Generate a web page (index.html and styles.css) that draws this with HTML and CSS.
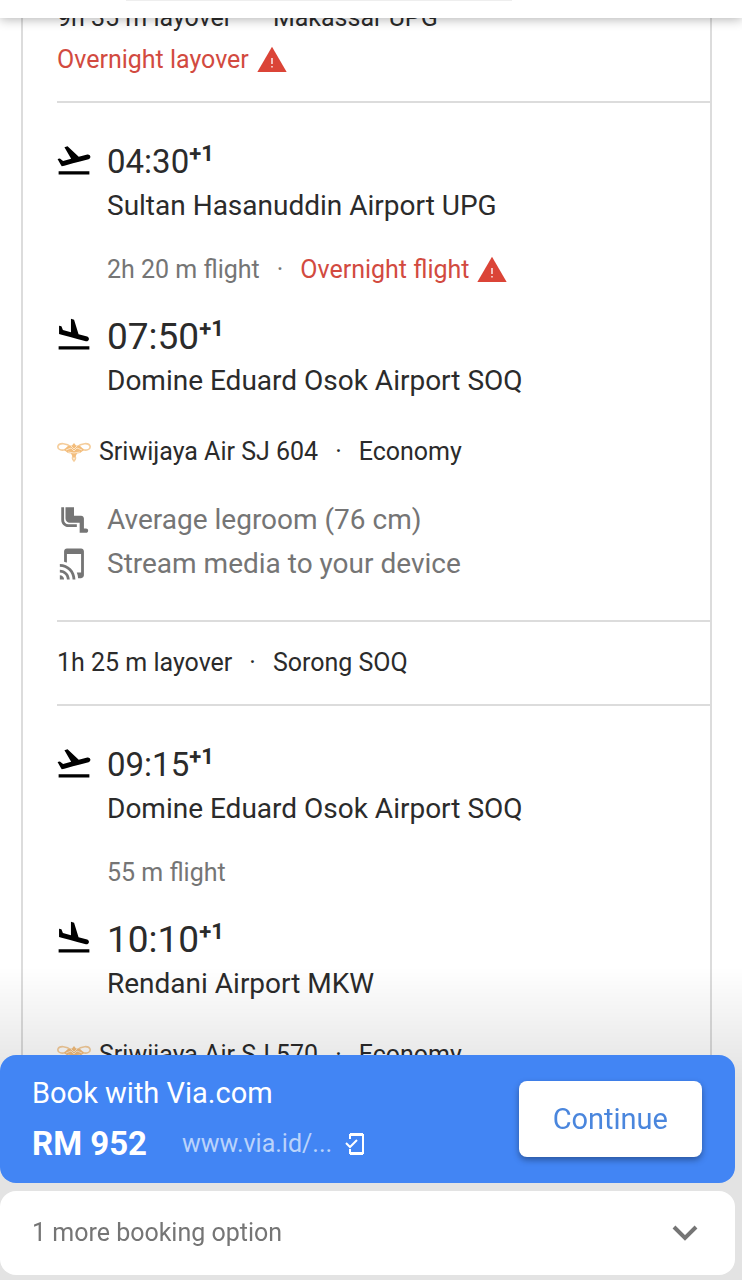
FILE: index.html
```html
<!DOCTYPE html>
<html lang="en">
<head>
<meta charset="utf-8">
<meta name="viewport" content="width=device-width, initial-scale=1">
<title>Flight details</title>
<link rel="stylesheet" href="styles.css">
</head>
<body>
<svg class="sprite" aria-hidden="true">
  <symbol id="takeoff" viewBox="1.5 1.5 21 21"><path d="M2.5 19h19v2h-19zm19.57-9.36c-.21-.8-1.04-1.28-1.84-1.06L14.92 10l-6.9-6.43-1.93.51 4.14 7.17-4.97 1.33-1.97-1.54-1.45.39 1.82 3.16.77 1.33 1.6-.43 5.31-1.42 4.35-1.16L21 11.49c.81-.23 1.28-1.05 1.07-1.85z"/></symbol>
  <symbol id="landing" viewBox="1.5 1.5 21 21"><path d="M2.5 19h19v2h-19zm7.18-5.73l4.35 1.16 5.31 1.42c.8.21 1.62-.26 1.84-1.06.21-.8-.26-1.62-1.06-1.84l-5.31-1.42-2.76-9.02L10.12 2v8.28L5.15 8.95l-.93-2.32-1.45-.39v5.17l1.6.43 5.31 1.43z"/></symbol>
  <symbol id="warning" viewBox="0 0 24 24"><path d="M1 21h22L12 2z"/><path fill="#fff" d="M11.5 10.5h1v4.5h-1zM11.5 16.5h1v1.2h-1z"/></symbol>
  <symbol id="legroom" viewBox="0 0 24 24"><path d="M5 12V3H3v9c0 2.76 2.24 5 5 5h6v-2H8c-1.66 0-3-1.34-3-3zm15.5 6H19v-7c0-1.1-.9-2-2-2h-5V3H6v8c0 1.65 1.35 3 3 3h7v7h4.5c.83 0 1.5-.67 1.5-1.5s-.67-1.5-1.5-1.5z"/></symbol>
  <symbol id="stream" viewBox="0 0 24 24"><path d="M2 16v2c2.76 0 5 2.24 5 5h2c0-3.87-3.13-7-7-7zm0 4v3h3c0-1.66-1.34-3-3-3zm0-8v2c4.97 0 9 4.03 9 9h2c0-6.08-4.92-11-11-11zM17 1.01L7 1c-1.1 0-2 .9-2 2v7.37c.69.16 1.36.37 2 .64V5h10v13h-3.03c.52 1.25.84 2.59.95 4H17c1.1 0 2-.9 2-2V3c0-1.1-.9-1.99-2-1.99z"/></symbol>
  <symbol id="sriwijaya" viewBox="0 0 34 22">
    <g fill="none" stroke="#f5cd9b" stroke-width="1.6">
      <path d="M14 6C10 2 2 1.500 1 5s4 5 7 3.500 3-4 6-2.500M20 6c4-4 12-4.500 13-1s-4 5-7 3.500-3-4-6-2.500"/>
      <path d="M17 14c-2 2-2 4 0 6 2-2 2-4 0-6"/>
    </g>
    <path fill="#f3bd7c" d="M17 2l2 2.500 4 .5 2 2 2 2-4 3-3 .5-1.500 3L17 17l-1.500-1.500-1.500-3-3-.5-4-3 2-2 2-2 4-.5z"/>
    <path d="M9 9l5-2 3 3 3-3 5 2M11 11l6 1 6-1M14 5l3 3 3-3" fill="none" stroke="#fdebd2" stroke-width=".9"/>
  </symbol>
</svg>

<header class="topbar"><div class="topbar-field"></div></header>

<main class="itinerary">
  <section class="layover">
    <p class="details"><span>9h 35 m layover</span><span>·</span><span>Makassar UPG</span></p>
    <p class="alert">Overnight layover <svg class="warning-icon"><use href="#warning"/></svg></p>
  </section>

  <section class="segment">
    <div class="stop">
      <svg class="stop-icon"><use href="#takeoff"/></svg>
      <div><p class="time departure">04:30<sup>+1</sup></p><p class="airport">Sultan Hasanuddin Airport UPG</p></div>
    </div>
    <p class="duration"><span>2h 20 m flight</span><span>·</span><span class="alert">Overnight flight <svg class="warning-icon"><use href="#warning"/></svg></span></p>
    <div class="stop">
      <svg class="stop-icon"><use href="#landing"/></svg>
      <div><p class="time arrival">07:50<sup>+1</sup></p><p class="airport">Domine Eduard Osok Airport SOQ</p></div>
    </div>
    <div class="airline"><svg class="airline-logo"><use href="#sriwijaya"/></svg><p class="airline-text"><span>Sriwijaya Air SJ 604</span><span>·</span><span>Economy</span></p></div>
    <ul class="amenities">
      <li><svg class="amenity-icon"><use href="#legroom"/></svg>Average legroom (76 cm)</li>
      <li><svg class="amenity-icon"><use href="#stream"/></svg>Stream media to your device</li>
    </ul>
  </section>

  <section class="layover">
    <p class="details"><span>1h 25 m layover</span><span>·</span><span>Sorong SOQ</span></p>
  </section>

  <section class="segment">
    <div class="stop">
      <svg class="stop-icon"><use href="#takeoff"/></svg>
      <div><p class="time departure">09:15<sup>+1</sup></p><p class="airport">Domine Eduard Osok Airport SOQ</p></div>
    </div>
    <p class="duration"><span>55 m flight</span></p>
    <div class="stop">
      <svg class="stop-icon"><use href="#landing"/></svg>
      <div><p class="time arrival">10:10<sup>+1</sup></p><p class="airport">Rendani Airport MKW</p></div>
    </div>
    <div class="airline"><svg class="airline-logo"><use href="#sriwijaya"/></svg><p class="airline-text"><span>Sriwijaya Air SJ 570</span><span>·</span><span>Economy</span></p></div>
  </section>
</main>

<footer class="booking">
  <div class="offer">
    <div class="offer-info">
      <p class="offer-title">Book with Via.com</p>
      <div class="offer-line">
        <strong class="price">RM 952</strong>
        <a class="site" href="#">www.via.id/...</a>
        <svg class="phone-icon" viewBox="0 0 20 24"><path d="M5 7V3h13v18H5v-4"/><path d="M5 2h13M5 22h13"/><path d="M1 11l4 4 7-7"/></svg>
      </div>
    </div>
    <button class="continue" type="button">Continue</button>
  </div>
  <button class="more" type="button">1 more booking option
    <svg class="chevron" viewBox="0 0 26 18"><path d="M2 3l11 11L24 3"/></svg>
  </button>
</footer>
</body>
</html>
```
FILE: styles.css
```css
* { box-sizing: border-box; }

body {
  margin: 0;
  height: 100vh;
  overflow: hidden;
  background: #fff;
  color: #2b2b2b;
  font-family: Roboto, "Liberation Sans", sans-serif;
  font-size: 25px;
}

p, ul { margin: 0; padding: 0; }
ul { list-style: none; }
svg { display: block; flex: none; fill: currentColor; }
.sprite { position: absolute; width: 0; height: 0; }

.topbar {
  position: fixed;
  top: 0;
  left: 0;
  right: 0;
  z-index: 1;
  height: 18px;
  padding: 0 31% 0 17%;
  background: #fff;
  box-shadow: 0 1px 12px rgba(0, 0, 0, .32);
}
.topbar-field {
  height: 1px;
  background: #eee;
}

/* Pulled up so the first layover sits partly scrolled under the top bar */
.itinerary {
  margin: -23px 30px 0 21px;
  padding-left: 34px;
  border: solid #dcdcdc;
  border-width: 0 2px;
}

.layover {
  padding: 20px 0;
  border-bottom: 2px solid #dcdcdc;
  line-height: 42px;
}
.details, .duration, .airline-text {
  display: flex;
  gap: 17px;
}
.alert {
  display: flex;
  align-items: center;
  gap: 7px;
  color: #d24a40;
}
.warning-icon { width: 32px; height: 32px; color: #db4437; }

.segment {
  padding: 37px 0 34px;
  border-bottom: 2px solid #dcdcdc;
}
.stop {
  display: grid;
  grid-template-columns: 50px 1fr;
  align-items: start;
}
.stop-icon {
  width: 34px;
  height: 34px;
  margin-top: 3px;
  color: #000;
}
.time { line-height: 44px; }
.departure { font-size: 33px; }
.arrival { font-size: 37px; }
.time sup {
  font-size: 22px;
  font-weight: 700;
  line-height: 0;
}
.airport { font-size: 28px; line-height: 44px; }
.duration {
  margin: 26px 0 29px 50px;
  color: #757575;
  line-height: 32px;
}
.airline {
  display: flex;
  align-items: center;
  gap: 8px;
  margin: 33px 0 30px;
  line-height: 32px;
}
.airline-logo { width: 34px; height: 22px; }

.amenities {
  color: #757575;
  font-size: 28px;
  line-height: 44px;
}
.amenities li {
  display: flex;
  align-items: center;
  gap: 16px;
}
.amenity-icon { width: 34px; height: 34px; }

.booking {
  position: fixed;
  left: 0;
  right: 0;
  bottom: 0;
  display: flex;
  flex-direction: column;
  gap: 8px;
  padding: 96px 7px 5px 0;
  background: linear-gradient(rgba(0, 0, 0, 0) 8px, rgba(0, 0, 0, .11) 120px);
}
.offer {
  display: flex;
  align-items: center;
  justify-content: space-between;
  padding: 13px 33px 13px 32px;
  border-radius: 16px;
  background: #4285f4;
  color: #fff;
}
.offer-title { font-size: 29px; line-height: 50px; }
.offer-line {
  display: flex;
  align-items: center;
  line-height: 52px;
}
.price { font-size: 33px; }
.site {
  margin: 0 13px 0 35px;
  color: #bad3fb;
  text-decoration: none;
}
.phone-icon {
  width: 20px;
  height: 24px;
  fill: none;
  stroke: #fff;
  stroke-width: 2;
}
.continue {
  padding: 16px 34px;
  border: 0;
  border-radius: 8px;
  background: #fff;
  box-shadow: 0 3px 6px rgba(0, 0, 0, .35);
  color: #4a86dd;
  font: 29px/44px Roboto, "Liberation Sans", sans-serif;
}
.more {
  display: flex;
  align-items: center;
  justify-content: space-between;
  padding: 20px 37px 20px 32px;
  border: 0;
  border-radius: 16px;
  background: #fff;
  color: #757575;
  font: 25px/44px Roboto, "Liberation Sans", sans-serif;
}
.chevron {
  width: 26px;
  height: 18px;
  fill: none;
  stroke: #757575;
  stroke-width: 4;
}
```
